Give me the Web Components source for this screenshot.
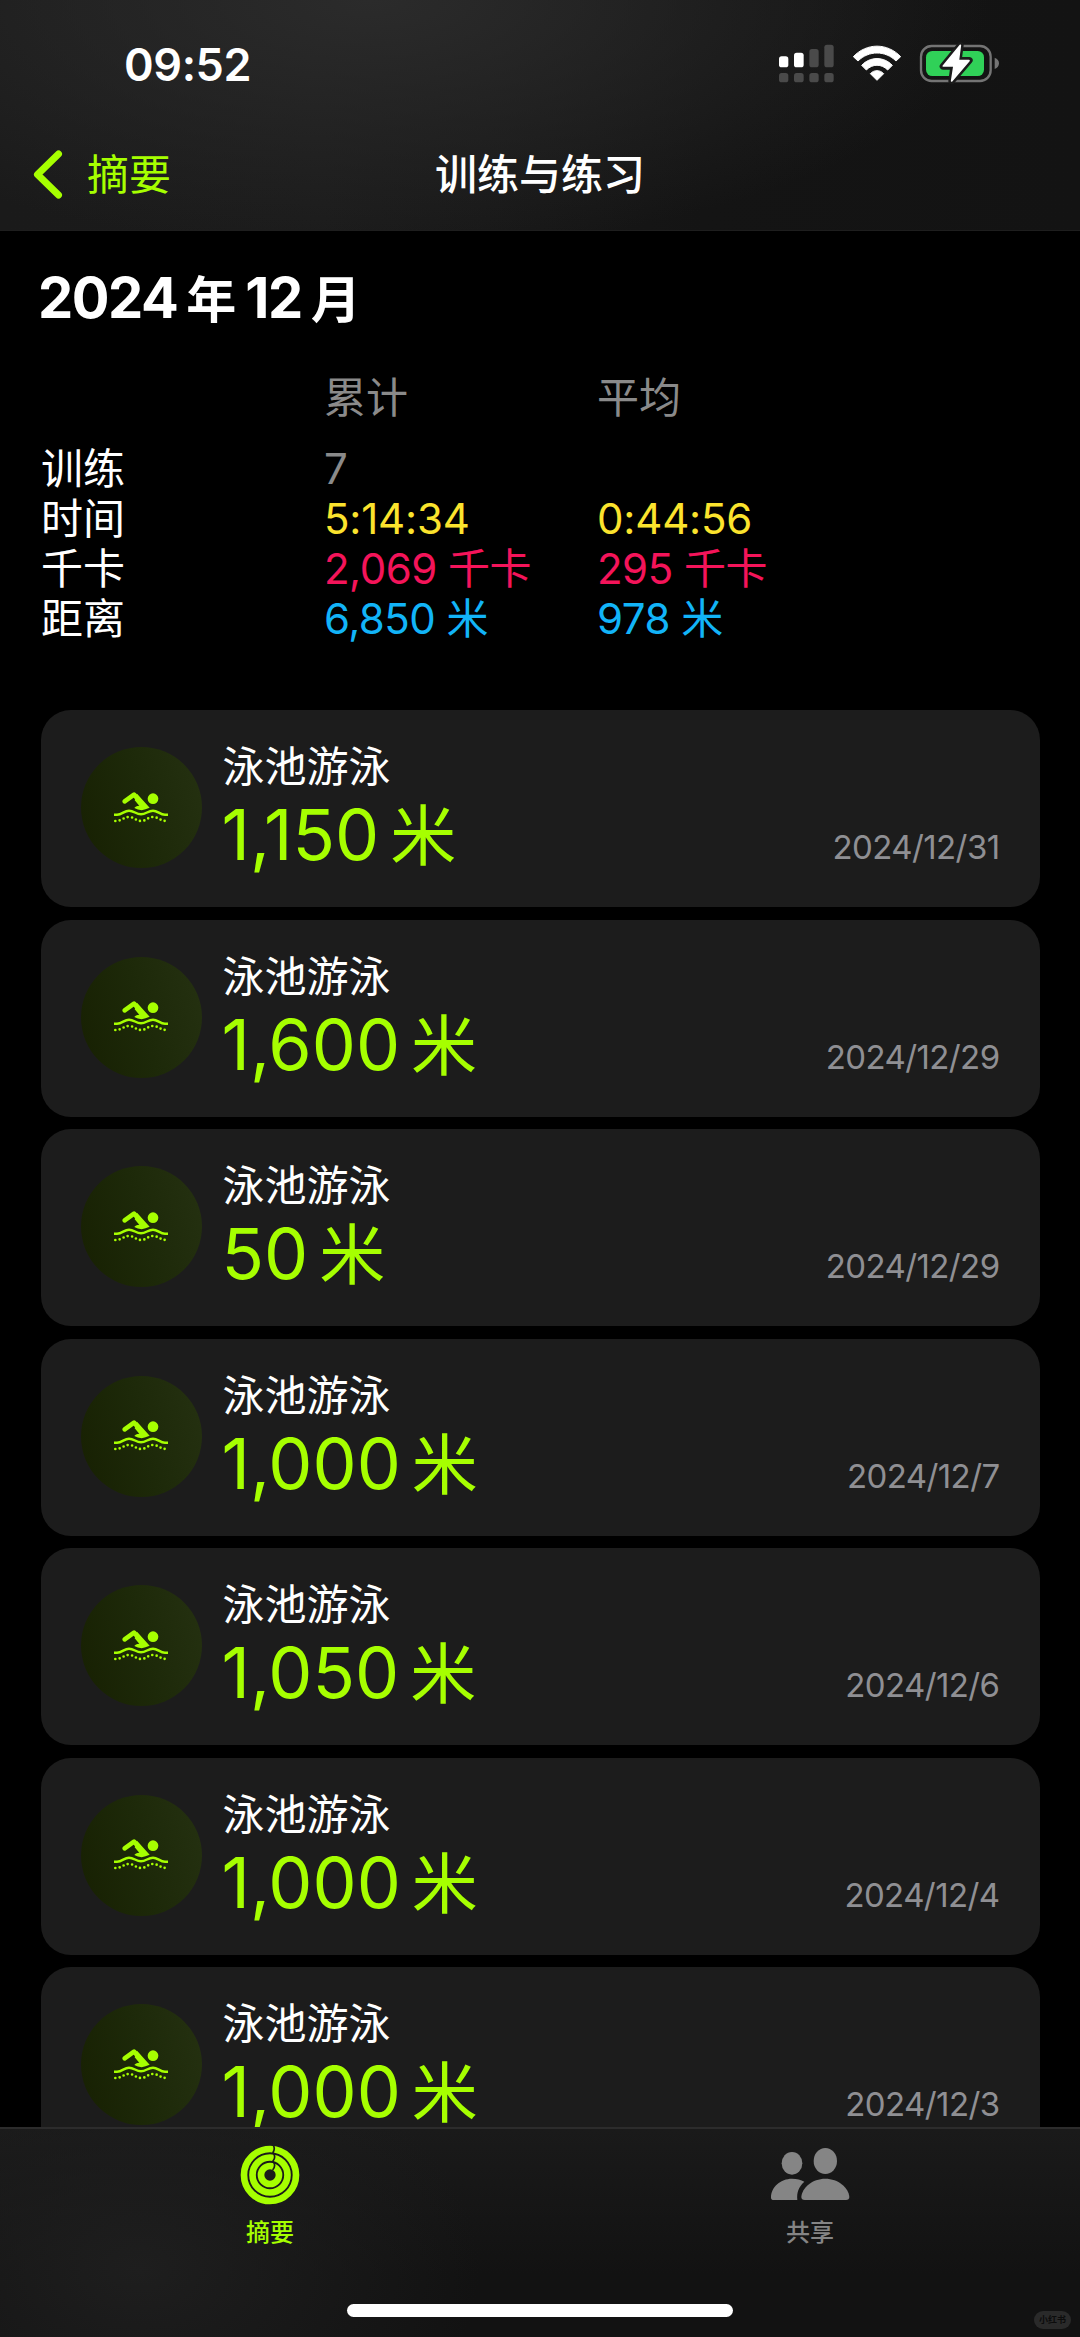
<!DOCTYPE html>
<html lang="zh-CN">
<head>
<meta charset="UTF-8">
<title>训练与练习</title>
<style>
  html, body { margin: 0; background: #000; }
  body {
    font-family: Inter, "Noto Sans CJK SC", sans-serif;
    color: #fff;
    width: 1080px; height: 2337px;
    overflow: hidden;
  }
</style>
</head>
<body>
<fitness-app></fitness-app>

<script>
class StatusBar extends HTMLElement {
  connectedCallback() {
    this.attachShadow({ mode: 'open' });
    this.shadowRoot.innerHTML = `
      <style>
        :host {
          display: flex; justify-content: space-between; align-items: center;
          height: 130px; padding: 0 69px 0 124px;
        }
        .time { font-size: 45px; font-weight: 600; line-height: 60px; letter-spacing: -0.4px; }
        svg { display: block; margin-top: -4px; }
      </style>
      <div class="time">${this.getAttribute('time') || ''}</div>
      <svg width="240" height="54" viewBox="0 0 720 162">
        <g fill="#fff">
          <rect x="24" y="61" width="28" height="33" rx="8"/>
          <rect x="69" y="50" width="29" height="44" rx="8"/>
        </g>
        <g fill="#4a4a4a">
          <rect x="115" y="39" width="28" height="55" rx="8"/>
          <rect x="160" y="26" width="28" height="68" rx="8"/>
          <rect x="24" y="111" width="28" height="28" rx="8"/>
          <rect x="69" y="111" width="29" height="28" rx="8"/>
          <rect x="115" y="111" width="28" height="28" rx="8"/>
          <rect x="160" y="111" width="28" height="28" rx="8"/>
        </g>
        <g fill="#fff" stroke="#fff" stroke-width="3" stroke-linejoin="round">
          <path d="M247 62 C287 20 349 20 389 62 L375 75 C343 43 293 43 261 75 Z"/>
          <path d="M272 88 C297 61 339 61 364 88 L350 102 C332 83 304 83 286 102 Z"/>
          <path d="M298 113 C309 101 327 101 338 113 L318 133 Z"/>
        </g>
        <rect x="450" y="30" width="209" height="105" rx="32" fill="none" stroke="#747474" stroke-width="7"/>
        <path d="M671 65 q13 5 13 17 t-13 17 Z" fill="#747474"/>
        <rect x="465" y="45" width="174" height="75" rx="19" fill="#30d158"/>
        <path d="M568 28 L516 91 H548 L542 135 L595 73 H562 Z" fill="#1b1b1b" stroke="#1b1b1b" stroke-width="20" stroke-linejoin="round"/>
        <path d="M568 28 L517 90 H549 L542 135 L594 74 H562 Z" fill="#fff" stroke="#fff" stroke-width="5" stroke-linejoin="round"/>
      </svg>`;
  }
}

class NavHeader extends HTMLElement {
  connectedCallback() {
    this.attachShadow({ mode: 'open' });
    this.shadowRoot.innerHTML = `
      <style>
        :host {
          display: block; height: 231px; box-sizing: border-box;
          border-bottom: 1px solid #1e1e1e;
          background:
            radial-gradient(ellipse 620px 250px at 370px 0, #2b2b2b, rgba(43,43,43,0)),
            linear-gradient(90deg, #1a1a1a, #1b1b1b 30%, #141414 65%, #131313);
        }
        .bar {
          display: grid; grid-template-columns: 1fr auto 1fr; align-items: center;
          height: 90px; font-size: 42px; line-height: 60px;
        }
        .back { display: flex; align-items: center; gap: 23px; padding-left: 32px; color: #a6ff00; }
        .title { font-weight: 500; }
      </style>
      <status-bar time="${this.getAttribute('time')}"></status-bar>
      <div class="bar">
        <div class="back">
          <svg width="32" height="52" viewBox="0 0 32 52" fill="none" stroke="currentColor" stroke-width="7" stroke-linecap="round" stroke-linejoin="round">
            <polyline points="26.5 5 5.5 25.5 26.5 46"/>
          </svg>
          <span>${this.getAttribute('back')}</span>
        </div>
        <div class="title"><slot></slot></div>
      </div>`;
  }
}

class MonthSummary extends HTMLElement {
  connectedCallback() {
    this.attachShadow({ mode: 'open' });
    this.shadowRoot.innerHTML = `
      <style>
        :host { display: block; padding: 34px 40px 0; height: 445px; }
        h1 { margin: 0 0 0 -2px; font-size: 56px; font-weight: 700; line-height: 66px; letter-spacing: -1.5px; }
        h1 span { font-size: 50px; letter-spacing: 0; }
        h1 .y { margin: 0 9px 0 9px; }
        h1 .m { margin-left: 9px; }
        .table {
          display: grid; grid-template-columns: 283px 273px 1fr;
          grid-template-rows: 70.5px; grid-auto-rows: 50.3px;
          margin-top: 40px; padding-left: 1px;
          font-size: 42px; line-height: 50px;
        }
        .head, .grey { color: #8a8a8a; }
        .time { color: #fbe32d; letter-spacing: -0.2px; }
        .kcal { color: #f4145a; letter-spacing: -0.5px; }
        .dist { color: #12b4f8; letter-spacing: -0.5px; }
      </style>
      <h1>2024<span class="y">年</span>12<span class="m">月</span></h1>
      <div class="table">
        <div></div><div class="head">累计</div><div class="head">平均</div>
        <div>训练</div><div class="grey">7</div><div></div>
        <div>时间</div><div class="time">5:14:34</div><div class="time">0:44:56</div>
        <div>千卡</div><div class="kcal">2,069 千卡</div><div class="kcal">295 千卡</div>
        <div>距离</div><div class="dist">6,850 米</div><div class="dist">978 米</div>
      </div>`;
  }
}

class WorkoutCard extends HTMLElement {
  connectedCallback() {
    this.attachShadow({ mode: 'open' });
    this.shadowRoot.innerHTML = `
      <style>
        :host {
          display: flex; box-sizing: border-box; height: 197px; flex: none;
          padding: 0 40px 0 40px; border-radius: 30px; background: #1c1c1c;
        }
        .icon {
          width: 121px; height: 121px; margin-top: 37px; border-radius: 50%; flex: none;
          display: flex; align-items: center; justify-content: center;
          background: linear-gradient(75deg, #172002, #1d2909 50%, #253111);
        }
        .info { flex: 1; margin-left: 21px; padding-top: 31px; }
        .name { font-size: 42px; line-height: 52px; }
        .value {
          margin: 4px 0 0 -1px; font-size: 70px; line-height: 76px;
          color: #a6ff00; white-space: nowrap;
        }
        .unit { font-size: 66px; margin-left: 11px; }
        .date {
          align-self: flex-end; margin-bottom: 40px;
          font-size: 33px; line-height: 40px; letter-spacing: -0.6px; color: #8f8f93;
        }
      </style>
      <div class="icon">
        <svg width="56" height="34" viewBox="69 183 168 102" fill="none" stroke="#a6ff00">
          <circle cx="189" cy="206" r="16" fill="#a6ff00" stroke="none"/>
          <polyline points="104 214 132 194 146 209" stroke-width="14" stroke-linecap="round" stroke-linejoin="round"/>
          <path d="M141 191 L179 233 Q166 238 155 241 Q143 240 133 234 Q136 228 148 227 L134 211 Z" fill="#a6ff00" stroke="none"/>
          <path d="M72 254 H81 C96 254 103 242 117 242 C132 242 138 253 153 253 C168 253 174 242 189 242 C203 242 210 254 225 254 H234" stroke-width="7.5"/>
          <path d="M76 273 C96 273 101 261 117 261 C133 261 137 273 153 273 C169 273 173 261 189 261 C205 261 211 273 230 273" stroke-width="8" stroke-linecap="round" stroke-dasharray="0 13.1"/>
        </svg>
      </div>
      <div class="info">
        <div class="name"><slot></slot></div>
        <div class="value">${this.getAttribute('distance')}<span class="unit">米</span></div>
      </div>
      <div class="date">${this.getAttribute('date')}</div>`;
  }
}

class TabBar extends HTMLElement {
  connectedCallback() {
    this.attachShadow({ mode: 'open' });
    this.shadowRoot.innerHTML = `
      <style>
        :host {
          display: block; position: relative; height: 210px; box-sizing: border-box; flex: none;
          border-top: 2px solid #2c2c2c;
          background:
            radial-gradient(ellipse 340px 230px at 140px 140px, #1e1e1e, rgba(30,30,30,0)),
            linear-gradient(#1a1a1a, #121212 70%);
        }
        .tabs { display: grid; grid-template-columns: 1fr 1fr; }
        .tab {
          display: flex; flex-direction: column; align-items: center;
          font-size: 24px; font-weight: 500; line-height: 30px; color: #858585;
        }
        .tab.on { color: #a6ff00; }
        .tab svg { display: block; margin: 16px 0 13px; }
        .home { width: 386px; height: 13px; border-radius: 7px; background: #fff; margin: 56px auto 0; }
        .mark {
          position: absolute; right: 9px; bottom: 8px; width: 37px; height: 18px;
          border-radius: 9px; background: #2a2a2a; color: #0c0c0c;
          font-size: 9px; font-weight: 700; line-height: 18px; text-align: center;
        }
      </style>
      <div class="tabs">
        <div class="tab on">
          <svg width="60" height="60" viewBox="0 0 180 180" fill="none" stroke="currentColor">
            <circle cx="90" cy="90" r="78" stroke-width="20"/>
            <circle cx="90" cy="90" r="52.5" stroke-width="20"/>
            <circle cx="90" cy="90" r="27" stroke-width="20"/>
            <path d="M100 1 Q106 11 99 22 L102 28 Q107 38 99 48 L102 54 Q107 64 98 75" stroke="#1b1b1b" stroke-width="5"/>
          </svg>
          <span>摘要</span>
        </div>
        <div class="tab">
          <svg width="80" height="60" viewBox="0 16 240 180" fill="currentColor">
            <ellipse cx="66" cy="71" rx="31" ry="34"/>
            <ellipse cx="166" cy="64" rx="35" ry="39"/>
            <path d="M3 174 C3 142 32 117 66 117 Q88 117 103 126 C85 143 80 158 82 181 H12 Q3 181 3 174 Z"/>
            <path d="M94 172 C96 144 127 117 166 117 C205 117 236 144 238 172 Q238 181 228 181 H104 Q94 181 94 172 Z"/>
          </svg>
          <span>共享</span>
        </div>
      </div>
      <div class="home"></div>
      <div class="mark">小红书</div>`;
  }
}

class FitnessApp extends HTMLElement {
  connectedCallback() {
    const workouts = [
      ['1,150', '2024/12/31'],
      ['1,600', '2024/12/29'],
      ['50', '2024/12/29'],
      ['1,000', '2024/12/7'],
      ['1,050', '2024/12/6'],
      ['1,000', '2024/12/4'],
      ['1,000', '2024/12/3'],
    ];
    this.attachShadow({ mode: 'open' });
    this.shadowRoot.innerHTML = `
      <style>
        :host { display: flex; flex-direction: column; height: 2337px; background: #000; }
        main { flex: 1; min-height: 0; overflow: hidden; }
        .list { display: flex; flex-direction: column; gap: 12.5px; padding: 0 40.5px; }
      </style>
      <nav-header time="09:52" back="摘要">训练与练习</nav-header>
      <main>
        <month-summary></month-summary>
        <div class="list">
          ${workouts.map(([distance, date]) => `
            <workout-card distance="${distance}" date="${date}">泳池游泳</workout-card>`).join('')}
        </div>
      </main>
      <tab-bar></tab-bar>`;
  }
}

customElements.define('status-bar', StatusBar);
customElements.define('nav-header', NavHeader);
customElements.define('month-summary', MonthSummary);
customElements.define('workout-card', WorkoutCard);
customElements.define('tab-bar', TabBar);
customElements.define('fitness-app', FitnessApp);
</script>
</body>
</html>
